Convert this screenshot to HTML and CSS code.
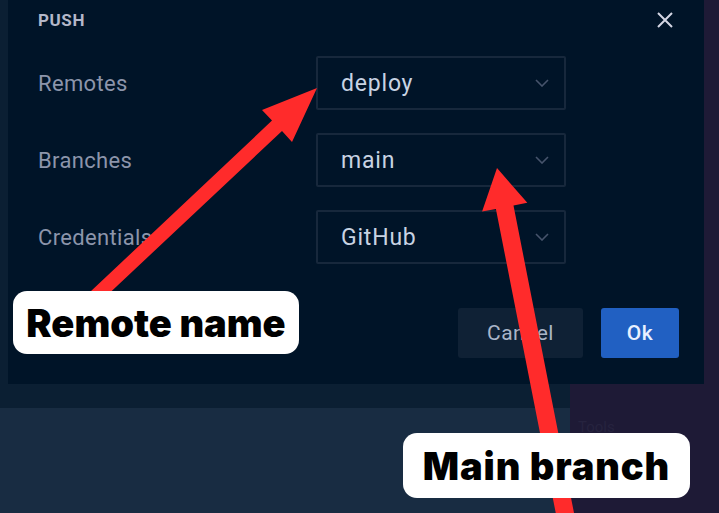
FILE: index.html
```html
<!DOCTYPE html>
<html>
<head>
<meta charset="utf-8">
<link rel="stylesheet" href="styles.css">
</head>
<body>
<div class="screen">
  <div class="main">
    <div class="top">
      <div class="gutter"></div>
      <div class="dialog">
        <div class="dialog-head">
          <span class="title">PUSH</span>
          <svg class="close" width="18" height="18" viewBox="0 0 18 18"><path d="M2 2L16 16M16 2L2 16" stroke="#d4d6e4" stroke-width="2" fill="none"/></svg>
        </div>
        <div class="form">
          <div class="label">Remotes</div>
          <div class="select"><span class="value">deploy</span><svg class="chev" width="14" height="8" viewBox="0 0 14 8"><path d="M1 1L7 7L13 1" stroke="#46546c" stroke-width="1.6" fill="none"/></svg></div>
          <div class="label">Branches</div>
          <div class="select"><span class="value">main</span><svg class="chev" width="14" height="8" viewBox="0 0 14 8"><path d="M1 1L7 7L13 1" stroke="#46546c" stroke-width="1.6" fill="none"/></svg></div>
          <div class="label">Credentials</div>
          <div class="select"><span class="value">GitHub</span><svg class="chev" width="14" height="8" viewBox="0 0 14 8"><path d="M1 1L7 7L13 1" stroke="#46546c" stroke-width="1.6" fill="none"/></svg></div>
        </div>
        <div class="actions">
          <button class="btn btn-cancel">Cancel</button>
          <button class="btn btn-ok">Ok</button>
        </div>
      </div>
    </div>
    <div class="strip"></div>
    <div class="lower">
      <div class="pane"></div>
      <div class="side"><span class="faint">Tools</span></div>
    </div>
  </div>
  <svg class="arrows" width="719" height="513" viewBox="0 0 719 513">
    <polygon fill="#ff2b2b" points="90,292 272,120.6 262,110 317,88 292,142 282,131 100,302"/>
    <polygon fill="#ff2b2b" points="497,168 527.3,202.8 513.5,205.5 575.3,519.5 557.7,522.9 495.9,208.9 482.1,211.6"/>
  </svg>
  <div class="callout callout-remote">Remote name</div>
  <div class="callout callout-branch">Main branch</div>
</div>
</body>
</html>
```
FILE: styles.css
```css
* { box-sizing: border-box; }
html, body { margin: 0; padding: 0; }
body {
  background: #1e1a36;
  font-family: Roboto, "Liberation Sans", sans-serif;
}
.screen {
  position: relative;
  width: 719px;
  height: 513px;
  overflow: hidden;
  background: #1e1a36;
}
.main {
  width: 704px;
  height: 513px;
  display: flex;
  flex-direction: column;
}
.top {
  display: flex;
  height: 384px;
}
.gutter {
  width: 8px;
  background: #0b1f33;
}
.dialog {
  flex: 1;
  background: #001428;
  padding: 0 25px 0 30px;
  display: flex;
  flex-direction: column;
}
.dialog-head {
  height: 39px;
  display: flex;
  align-items: center;
  justify-content: space-between;
  padding-right: 5px;
}
.title {
  font-size: 17px;
  font-weight: 700;
  color: #b4b8c9;
  letter-spacing: 0.6px;
}
.close { display: block; }
.form {
  margin-top: 17px;
  display: grid;
  grid-template-columns: 278px 250px;
  grid-auto-rows: 54px;
  row-gap: 23px;
}
.label {
  display: flex;
  align-items: center;
  font-size: 22px;
  letter-spacing: 0.35px;
  color: #8c95ab;
}
.select {
  border: 2px solid #17283c;
  border-radius: 2px;
  display: flex;
  align-items: center;
  justify-content: space-between;
  padding: 0 15px 0 23px;
}
.value {
  font-size: 23px;
  letter-spacing: 0.8px;
  color: #c8d3e3;
}
.actions {
  margin-top: 44px;
  display: flex;
  justify-content: flex-end;
  gap: 18px;
}
.btn {
  height: 50px;
  border: none;
  border-radius: 3px;
  font-family: Roboto, "Liberation Sans", sans-serif;
  font-size: 21px;
  letter-spacing: 0.5px;
}
.btn-cancel {
  width: 125px;
  background: #0f2135;
  color: #a9b5c8;
}
.btn-ok {
  width: 78px;
  background: #2160c2;
  color: #e8f0ff;
  font-weight: 500;
}
.strip {
  width: 570px;
  height: 24px;
  background: #0b1f33;
}
.lower {
  flex: 1;
  display: flex;
}
.pane {
  width: 570px;
  background: #182c42;
}
.side {
  flex: 1;
  padding: 9px 0 0 8px;
}
.faint {
  font-size: 15px;
  color: #26233f;
}
.arrows {
  position: absolute;
  left: 0;
  top: 0;
}
.callout {
  position: absolute;
  background: #ffffff;
  border-radius: 14px;
  color: #000;
  font-family: Inter, Lato, sans-serif;
  font-weight: 900;
  font-size: 38px;
  display: flex;
  align-items: center;
  justify-content: center;
}
.callout-remote {
  left: 13px;
  top: 291px;
  width: 286px;
  height: 63px;
}
.callout-branch {
  left: 403px;
  top: 433px;
  width: 287px;
  height: 65px;
  letter-spacing: 0.9px;
}
```
